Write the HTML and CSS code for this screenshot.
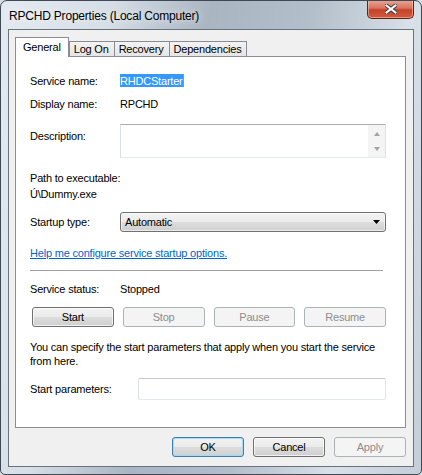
FILE: index.html
```html
<!DOCTYPE html>
<html lang="en">
<head>
    <meta charset="UTF-8">
    <title>RPCHD Properties (Local Computer)</title>
    <link rel="stylesheet" href="styles.css">
</head>
<body>
    <div class="window">
        <div class="titlebar">
            <span class="title">RPCHD Properties (Local Computer)</span>
            <div class="close">
                <svg width="12" height="10" viewBox="0 0 12 10">
                    <path d="M1.5 1.5L10.5 8.5M10.5 1.5L1.5 8.5" stroke="#3a3a3a" stroke-width="4" stroke-linecap="square"/>
                    <path d="M1.5 1.5L10.5 8.5M10.5 1.5L1.5 8.5" stroke="#ffffff" stroke-width="2" stroke-linecap="square"/>
                </svg>
            </div>
        </div>

        <div class="client">
            <div class="tabs">
                <div class="tab active">General</div>
                <div class="tab">Log On</div>
                <div class="tab">Recovery</div>
                <div class="tab">Dependencies</div>
            </div>

            <div class="panel">
                <div class="row first">
                    <span>Service name:</span>
                    <span><span class="selected">RHDCStarter</span></span>
                </div>
                <div class="row gap9">
                    <span>Display name:</span>
                    <span>RPCHD</span>
                </div>
                <div class="row top gap13">
                    <span class="label-pad">Description:</span>
                    <div class="textbox">
                        <div class="scrollbar">
                            <span class="arrow up"></span>
                            <span class="arrow down"></span>
                        </div>
                    </div>
                </div>
                <div class="line gap13">Path to executable:</div>
                <div class="line gap2">Ú\Dummy.exe</div>
                <div class="row gap11">
                    <span>Startup type:</span>
                    <div class="combo">
                        <span>Automatic</span>
                        <svg width="7" height="4" viewBox="0 0 7 4"><path d="M0 0H7L3.5 4Z" fill="#000"/></svg>
                    </div>
                </div>
                <div class="line gap14"><a class="link" href="#">Help me configure service startup options.</a></div>
                <div class="separator"></div>
                <div class="row gap11">
                    <span>Service status:</span>
                    <span>Stopped</span>
                </div>
                <div class="actions">
                    <button class="btn">Start</button>
                    <button class="btn" disabled>Stop</button>
                    <button class="btn" disabled>Pause</button>
                    <button class="btn" disabled>Resume</button>
                </div>
                <p class="note">You can specify the start parameters that apply when you start the service from here.</p>
                <div class="row params">
                    <span>Start parameters:</span>
                    <div class="input"></div>
                </div>
            </div>

            <div class="footer">
                <button class="btn default">OK</button>
                <button class="btn">Cancel</button>
                <button class="btn" disabled>Apply</button>
            </div>
        </div>
    </div>
</body>
</html>
```

FILE: styles.css
```css
* {
    box-sizing: border-box;
}
body {
    margin: 0;
    width: 422px;
    height: 475px;
    background: #d9dee3;
    font-family: "Liberation Sans", Arial, sans-serif;
    font-size: 11px;
    letter-spacing: -0.2px;
    color: #000;
}
.window {
    width: 422px;
    height: 475px;
    display: flex;
    flex-direction: column;
    border: 1px solid #3e4955;
    border-radius: 7px 7px 5px 5px;
    background: linear-gradient(100deg, #e4eaf0 0%, #d6dee6 22%, #a9b5c1 42%, #b2bec9 62%, #d8e0e8 82%, #c4ced8 100%);
    overflow: hidden;
}
.titlebar {
    height: 28px;
    flex: none;
    display: flex;
    align-items: flex-start;
    justify-content: space-between;
    padding-left: 8px;
}
.title {
    font-size: 12px;
    line-height: 28px;
    margin-top: 1px;
    text-shadow: 0 0 6px rgba(255,255,255,0.9);
}
.close {
    width: 47px;
    height: 19px;
    margin-right: 7px;
    margin-top: -1px;
    display: flex;
    align-items: center;
    justify-content: center;
    border: 1px solid #5b2418;
    border-top: none;
    border-radius: 0 0 5px 5px;
    background: linear-gradient(#e9a897 0%, #d8735d 45%, #c2432a 55%, #d45b3f 100%);
    box-shadow: inset 0 0 0 1px rgba(255,210,200,0.5);
}
.client {
    flex: 1;
    margin: 0 7px 7px;
    border: 1px solid #68737f;
    background: #f0f0f0;
    padding: 7px 7px 9px 6px;
    display: flex;
    flex-direction: column;
}
.tabs {
    display: flex;
    align-items: flex-end;
    height: 20px;
    margin-bottom: -1px;
}
.tab {
    height: 16px;
    line-height: 15px;
    padding: 0 5px 0 4px;
    margin-left: -1px;
    border: 1px solid #898c95;
    border-bottom: none;
    background: linear-gradient(#f3f3f3, #e4e4e4);
}
.tab.active {
    position: relative;
    z-index: 1;
    height: 20px;
    line-height: 19px;
    padding: 0 7px;
    margin-left: 0;
    margin-right: 1px;
    background: #fff;
}
.panel {
    height: 372px;
    border: 1px solid #898c95;
    background: #fff;
    padding: 0 19px 0 14px;
}
.row {
    display: grid;
    grid-template-columns: 90px 1fr;
    align-items: center;
    line-height: 14px;
}
.row.top {
    align-items: start;
}
.label-pad {
    padding-top: 5px;
}
.line {
    line-height: 14px;
}
.first { margin-top: 17px; }
.gap2 { margin-top: 2px; }
.gap9 { margin-top: 9px; }
.gap11 { margin-top: 11px; }
.gap13 { margin-top: 13px; }
.gap14 { margin-top: 14px; }
.selected {
    background: #3399ff;
    color: #fff;
    padding: 1px 0 0;
    border-right: 1px solid #e8821c;
}
.textbox {
    height: 34px;
    border: 1px solid;
    border-color: #abadb3 #e2e3ea #e3e9ef #dbdfe6;
    display: flex;
    justify-content: flex-end;
}
.scrollbar {
    width: 17px;
    background: #f4f4f4;
    display: flex;
    flex-direction: column;
    justify-content: space-between;
    align-items: center;
    padding: 7px 0 6px;
}
.arrow {
    width: 0;
    height: 0;
    border-left: 3.5px solid transparent;
    border-right: 3.5px solid transparent;
}
.arrow.up {
    border-bottom: 4px solid #a3a3a3;
}
.arrow.down {
    border-top: 4px solid #a3a3a3;
}
.combo {
    height: 20px;
    display: flex;
    align-items: center;
    justify-content: space-between;
    padding: 0 5px 0 4px;
    border: 1px solid #707070;
    border-radius: 3px;
    background: linear-gradient(#f2f2f2 0%, #ebebeb 50%, #dddddd 50%, #cfcfcf 100%);
    box-shadow: inset 0 0 0 1px rgba(255,255,255,0.6);
}
.link {
    color: #0066cc;
    text-decoration: underline;
}
.separator {
    margin: 10px 3px 0 0;
    border-top: 1px solid #a0a0a0;
}
.actions {
    margin-top: 11px;
    padding-left: 2px;
    display: grid;
    grid-template-columns: repeat(4, 1fr);
    gap: 9px;
}
.btn {
    height: 20px;
    padding: 0;
    font: inherit;
    letter-spacing: inherit;
    color: #000;
    border: 1px solid #707070;
    border-radius: 3px;
    background: linear-gradient(#f2f2f2 0%, #ebebeb 50%, #dddddd 50%, #cfcfcf 100%);
    box-shadow: inset 0 0 0 1px rgba(255,255,255,0.7);
}
.btn:disabled {
    color: #8d8d8d;
    border-color: #adb2b5;
    background: #f4f4f4;
    box-shadow: none;
}
.btn.default {
    border-color: #3c7fb1;
    box-shadow: inset 0 0 0 1px #a6d9f4;
}
.note {
    margin: 13px 0 0;
    line-height: 14px;
}
.params {
    margin-top: 10px;
    grid-template-columns: 108px 1fr;
}
.input {
    height: 22px;
    border: 1px solid;
    border-color: #c3c6cc #e2e3ea #e3e9ef #dbdfe6;
    border-radius: 2px;
}
.footer {
    margin-top: 9px;
    display: flex;
    justify-content: flex-end;
    gap: 9px;
}
.footer .btn {
    width: 72px;
}
```
